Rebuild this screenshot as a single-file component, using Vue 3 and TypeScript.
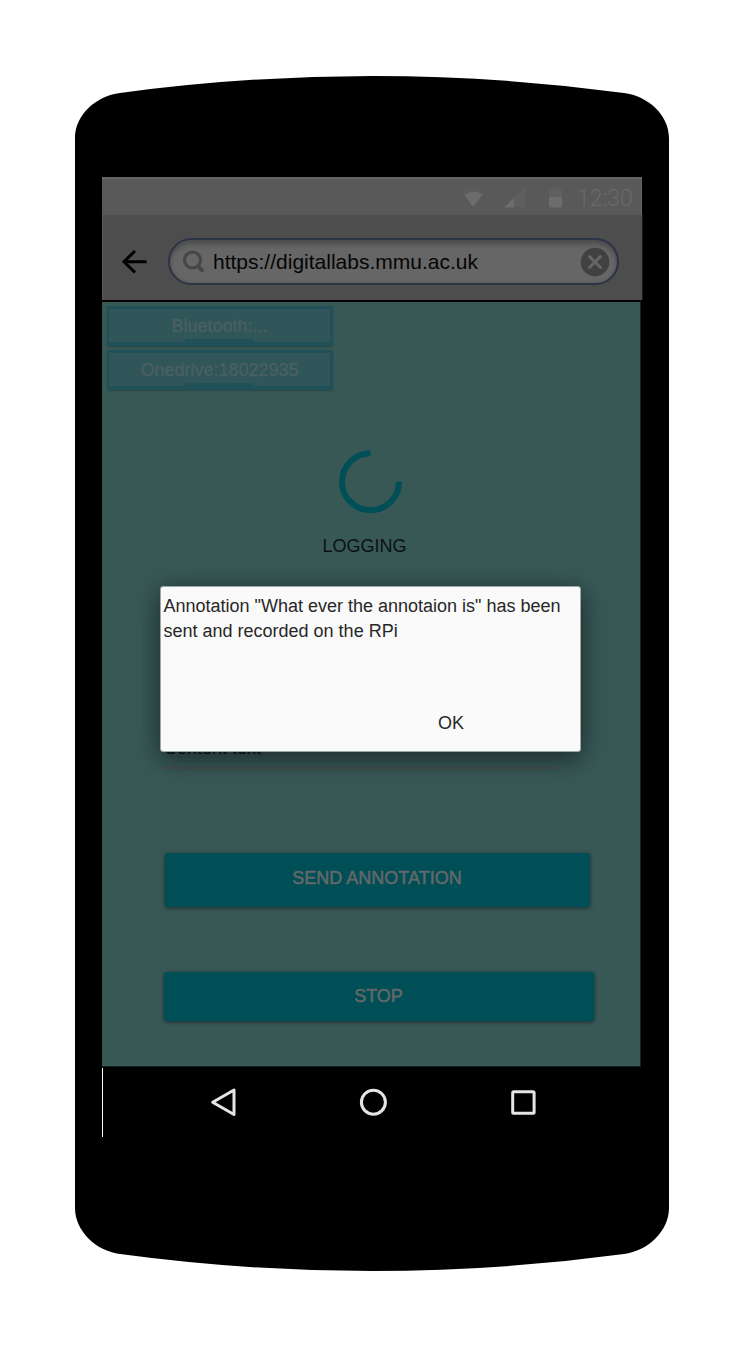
<script setup lang="ts">
interface Device {
  label: string
}

const devices: Device[] = [{ label: 'Bluetooth:...' }, { label: 'Onedrive:18022935' }]
const address = 'https://digitallabs.mmu.ac.uk'
const messageLines: string[] = [
  'Annotation "What ever the annotaion is" has been',
  'sent and recorded on the RPi',
]
</script>

<template>
  <main class="stage">
    <svg class="body" viewBox="0 0 744 1347" width="744" height="1347" aria-hidden="true">
      <path
        d="M75 138C75 115 96 96 120 93Q246 76 372 76Q498 76 624 93C648 96 669 115 669 138V1208C669 1231 648 1251 624 1254Q498 1271 372 1271Q246 1271 120 1254C96 1251 75 1231 75 1208Z"
      />
    </svg>

    <div class="screen">
      <header class="status">
        <svg class="status-icons" width="106" height="24" viewBox="0 0 106 24" aria-hidden="true">
          <path d="M0 5Q12 -3 23 5L11.500 20Z" fill="#5d5d5d" />
          <path d="M2 7.500Q11.500 2 20.500 7.500L11 20Z" fill="#6c6c6c" />
          <path d="M42 20.500L63 0V20.500Z" fill="#5f5f5f" />
          <path d="M42 20.500L52 11V20.500Z" fill="#6c6c6c" />
          <path d="M87 2.500h3v-2h7v2h3v8H87z" fill="#5f5f5f" />
          <path d="M87 10h13v9q0 1.500-1.500 1.500h-10q-1.500 0-1.500-1.500z" fill="#6c6c6c" />
        </svg>
        <span class="clock">12:30</span>
      </header>

      <div class="toolbar">
        <svg class="back" width="26" height="26" viewBox="0 0 26 26" aria-hidden="true">
          <path d="M25.500 12.700H3.500M14 2L3 12.700L14 23.500" fill="none" stroke="#000" stroke-width="3" />
        </svg>
        <div class="address">
          <svg class="search" width="24" height="26" viewBox="0 0 24 26" aria-hidden="true">
            <circle cx="10.500" cy="11" r="8" fill="none" stroke="#464646" stroke-width="3" />
            <path d="M15.500 16.500L21 22.500" stroke="#464646" stroke-width="4" />
          </svg>
          <span class="url">{{ address }}</span>
          <svg class="clear" width="30" height="30" viewBox="0 0 30 30" aria-hidden="true">
            <circle cx="15" cy="15" r="14.300" fill="#414141" />
            <path d="M9.500 9.500L20.500 20.500M20.500 9.500L9.500 20.500" stroke="#666" stroke-width="3" stroke-linecap="round" />
          </svg>
        </div>
      </div>

      <section class="content">
        <div class="devices">
          <div v-for="device in devices" :key="device.label" class="device">
            <span>{{ device.label }}</span>
          </div>
        </div>

        <svg class="spinner" width="64" height="64" viewBox="0 0 64 64" aria-hidden="true">
          <path d="M31.500 3.200A28.500 28.500 0 1 0 60 31.700" fill="none" stroke="#004e56" stroke-width="6" />
        </svg>
        <p class="state">LOGGING</p>

        <div class="field"><span>Content text</span></div>

        <button class="action send" type="button">SEND ANNOTATION</button>
        <button class="action stop" type="button">STOP</button>

        <div class="dialog" role="dialog">
          <p class="message">
            <span v-for="line in messageLines" :key="line">{{ line }}</span>
          </p>
          <button class="ok" type="button">OK</button>
        </div>
      </section>

      <nav class="nav">
        <svg width="28" height="30" viewBox="0 0 28 30" aria-hidden="true">
          <path d="M25 3V27.500L3.700 15.200Z" />
        </svg>
        <svg width="28" height="30" viewBox="0 0 28 30" aria-hidden="true">
          <circle cx="14.400" cy="15.200" r="12" />
        </svg>
        <svg width="28" height="30" viewBox="0 0 28 30" aria-hidden="true">
          <rect x="3.700" y="4.800" width="21.400" height="21.400" rx="1" />
        </svg>
      </nav>
    </div>
  </main>
</template>

<style>
body {
  background: #fff;
}
</style>

<style scoped>
.stage {
  position: relative;
  box-sizing: border-box;
  width: 744px;
  height: 1347px;
  padding: 177px 0 0 102px;
  overflow: hidden;
  background: #fff;
  font-family: 'Liberation Sans', Arial, sans-serif;
}

.body {
  position: absolute;
  inset: 0;
}

.screen {
  position: relative;
  width: 540px;
}

.status {
  display: flex;
  box-sizing: border-box;
  width: 540px;
  height: 38px;
  padding-left: 360px;
  border-top: 2px solid #666;
  border-right: 1px solid #666;
  background: #595959;
}

.status-icons {
  flex: none;
  margin-top: 8px;
}

.clock {
  margin-left: 9px;
  color: #696969;
  font: 300 23px/39px Roboto, sans-serif;
}

.toolbar {
  display: flex;
  align-items: flex-start;
  box-sizing: border-box;
  height: 85px;
  padding: 23px 0 0 18px;
  border-left: 1px solid #5a5a5a;
  background: #4d4d4d;
  box-shadow: 1px 0 0 #1c1c1c;
}

.back {
  flex: none;
  margin-top: 11px;
}

.address {
  display: flex;
  align-items: center;
  box-sizing: border-box;
  width: 451px;
  height: 47px;
  margin-left: 21px;
  padding: 0 7px 0 12px;
  border: 2px solid #2b3444;
  border-radius: 24px;
  background: #666;
  box-shadow: inset 0 5px 5px -1px #4c4c4c, inset 0 0 3px #555;
}

.search {
  flex: none;
}

.url {
  flex: 1;
  margin-left: 7px;
  color: #050505;
  font-size: 21px;
  white-space: nowrap;
}

.clear {
  flex: none;
}

.content {
  position: relative;
  display: flex;
  flex-direction: column;
  box-sizing: border-box;
  width: 539px;
  height: 767px;
  padding: 4px 0 0;
  border-top: 2px solid #000;
  border-right: 1px solid #142321;
  border-bottom: 1px solid #142321;
  background: #385856;
}

.devices {
  display: flex;
  flex-direction: column;
  gap: 4px;
  margin-left: 5px;
}

.device {
  position: relative;
  box-sizing: border-box;
  width: 226px;
  height: 40px;
  border: 3px solid #205058;
  border-width: 3px 3px 4px 2px;
  border-radius: 2px;
  background: #305659;
  color: #4a6063;
  font-size: 18px;
  line-height: 34px;
  text-align: center;
  box-shadow: 0 1px 2px rgba(0, 0, 0, 0.2);
  -webkit-text-stroke: 0.300px #4a6063;
}

.device::after {
  position: absolute;
  bottom: -2px;
  left: 76px;
  width: 69px;
  height: 5px;
  background: #205058;
  content: '';
}

.spinner {
  flex: none;
  margin: 60px 0 0 236.500px;
}

.state {
  margin: 21px 0 0 220.500px;
  color: #0b1111;
  font-size: 18px;
  line-height: 22px;
}

.field {
  box-sizing: border-box;
  width: 392px;
  height: 32px;
  margin: 180px 0 0 62px;
  border-bottom: 2px solid #494b4b;
  color: #0b1111;
  font-size: 18px;
  line-height: 22px;
}

.action {
  display: block;
  flex: none;
  padding: 0;
  border: 0;
  border-radius: 3px;
  background: #004e56;
  box-shadow: 0 1px 4px rgba(0, 0, 0, 0.5);
  color: #646868;
  font: 18px 'Liberation Sans', Arial, sans-serif;
  -webkit-text-stroke: 0.500px #646868;
}

.send {
  width: 425px;
  height: 54px;
  margin: 84px 0 0 62.500px;
  padding-bottom: 3px;
}

.stop {
  width: 430px;
  height: 49px;
  margin: 65px 0 0 61.500px;
  padding-bottom: 1px;
}

.dialog {
  position: absolute;
  top: 284px;
  left: 58px;
  display: flex;
  flex-direction: column;
  box-sizing: border-box;
  width: 421px;
  height: 166px;
  padding: 6.500px 2.500px;
  border: 1px solid #9aa8a7;
  border-radius: 3px;
  background: #fafafa;
  box-shadow: 0 5px 30px rgba(0, 0, 0, 0.36), 0 7px 18px rgba(0, 0, 0, 0.22);
  color: #272727;
  font-size: 18px;
}

.message {
  display: flex;
  flex-direction: column;
  margin: 0;
  line-height: 25px;
  white-space: nowrap;
}

.ok {
  width: 40px;
  height: 24px;
  margin: 67px 0 0 267.500px;
  padding: 0;
  border: 0;
  background: transparent;
  color: #272727;
  font: 18px/24px 'Liberation Sans', Arial, sans-serif;
}

.nav {
  display: flex;
  gap: 122px;
  box-sizing: border-box;
  height: 69px;
  margin-top: 1px;
  padding: 19px 0 0 106px;
  border-left: 1px solid #fff;
}

.nav svg {
  flex: none;
  fill: none;
  stroke: #e5e5e5;
  stroke-width: 3;
  stroke-linejoin: round;
}
</style>
